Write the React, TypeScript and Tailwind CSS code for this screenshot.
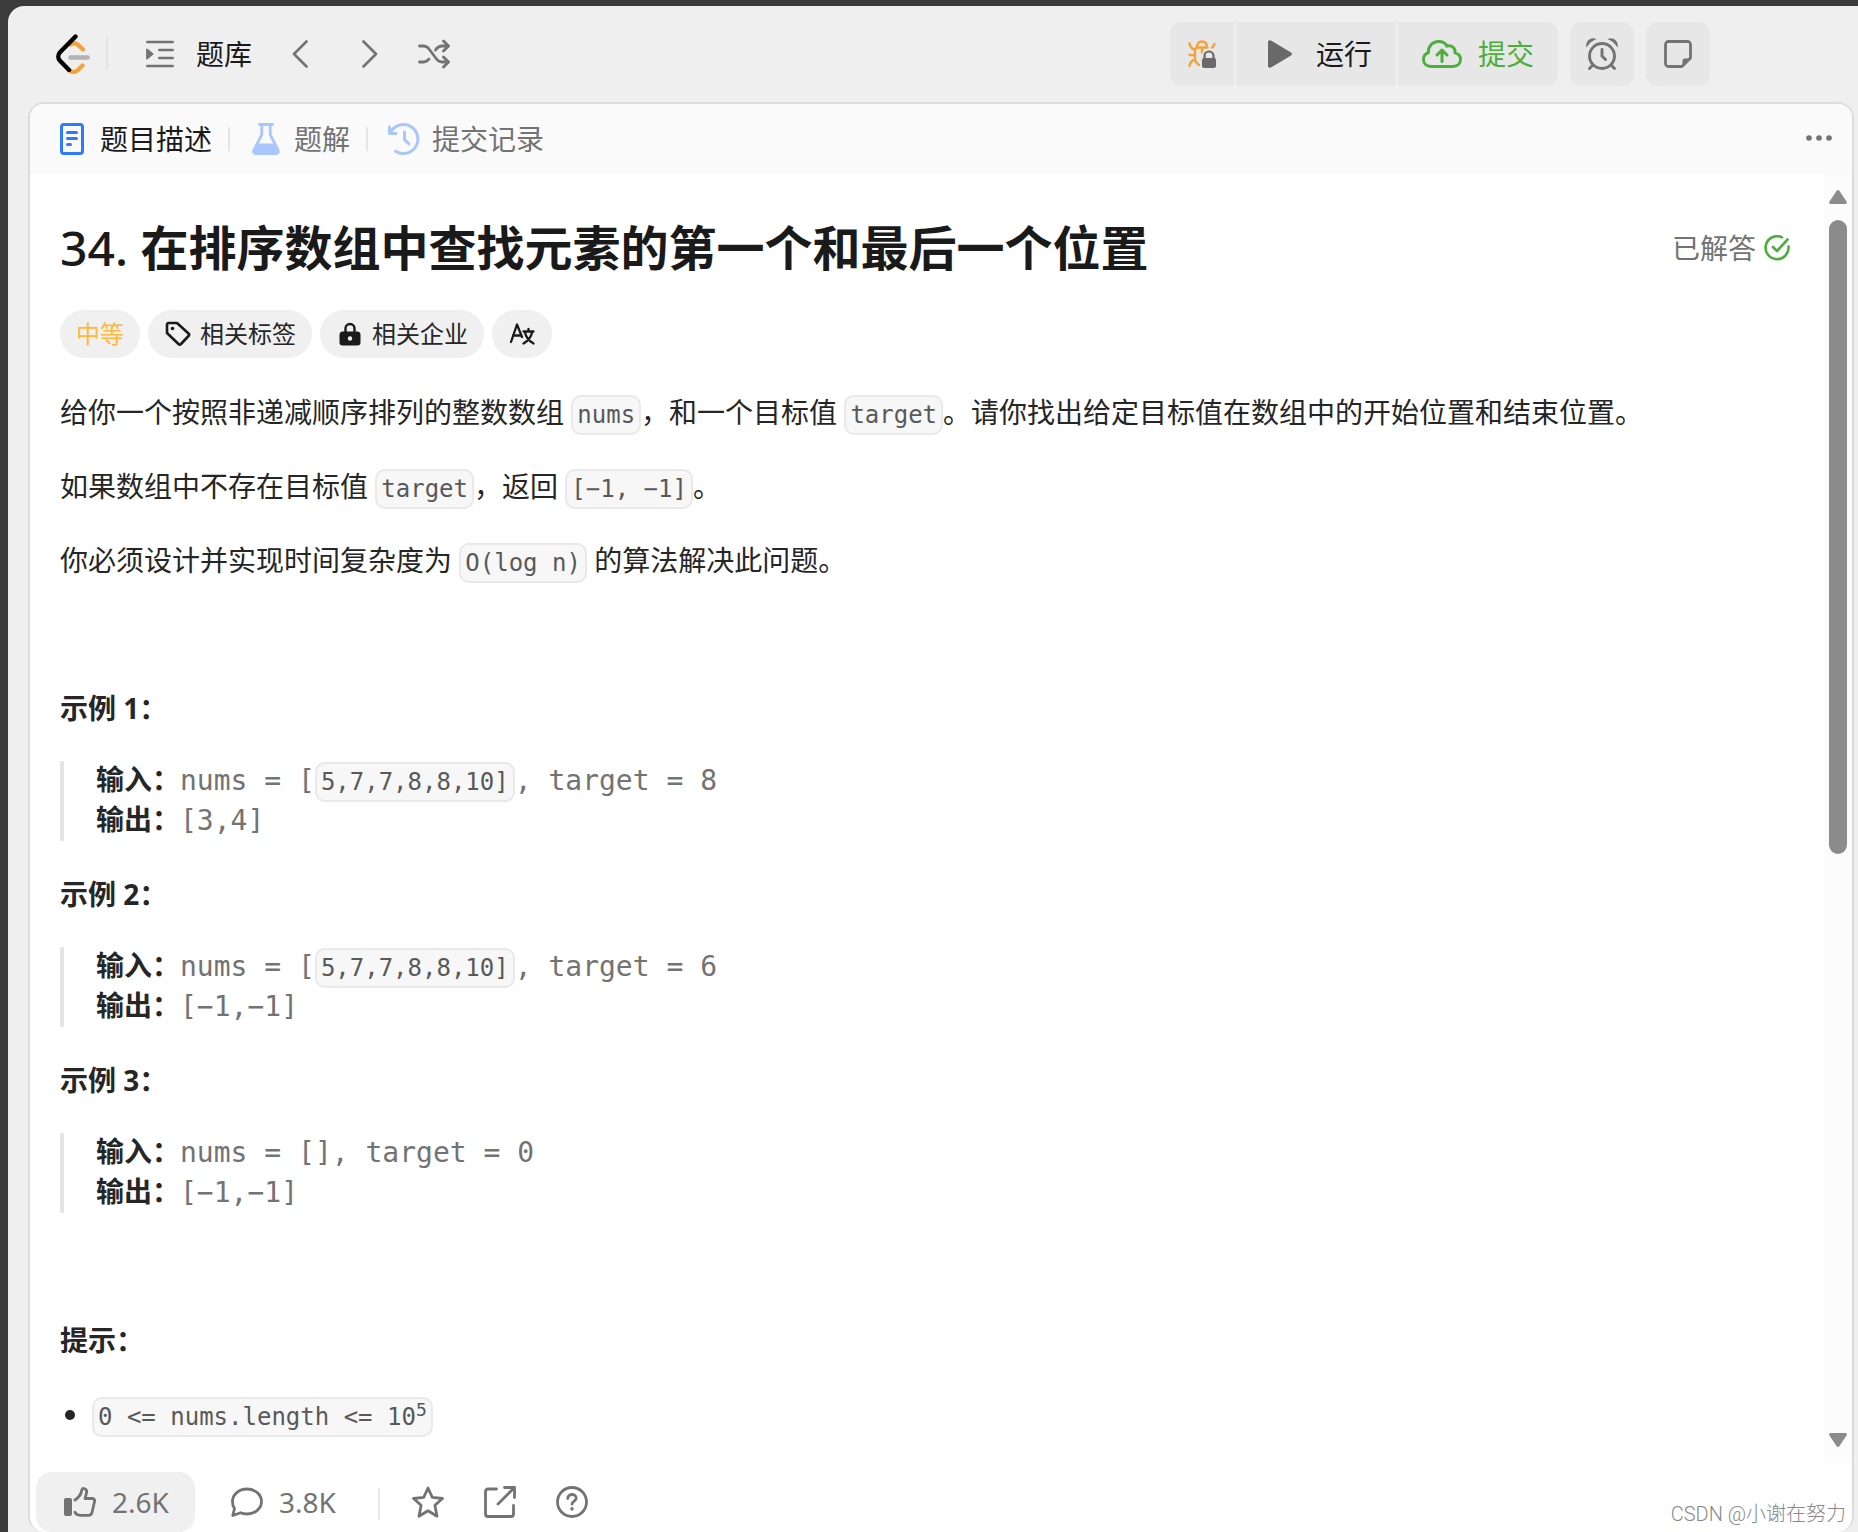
import type { ReactNode } from 'react';

const examples = [
  { id: 1, list: '5,7,7,8,8,10', target: '8', output: '[3,4]' },
  { id: 2, list: '5,7,7,8,8,10', target: '6', output: '[−1,−1]' },
  { id: 3, list: '', target: '0', output: '[−1,−1]' },
];

function Code({ children }: { children: ReactNode }) {
  return (
    <code className="rounded-[10px] border-2 border-[#e9e9e9] bg-[#f7f7f7] px-1 py-1 font-['DejaVu_Sans_Mono','Noto_Sans_CJK_SC',monospace] text-2xl leading-none text-[#595959]">
      {children}
    </code>
  );
}

function Divider() {
  return <div className="h-6 w-0.5 bg-[#e5e5e5]" />;
}

function Logo() {
  return (
    <svg className="h-10 w-[34px]" viewBox="0 0 34 40" fill="none" strokeLinecap="round">
      <path d="M14.500 10.500c3-2 5.500-1.500 7.500.3L27 15.500" stroke="#f3a33c" strokeWidth="4.400" />
      <path d="M13 36.200c2.800 2.200 6.500 2.200 9-.2L26.500 31.500" stroke="#f3a33c" strokeWidth="4.400" />
      <path d="M14.500 23.500h17.200" stroke="#b3b3b3" strokeWidth="4.400" />
      <path d="M19.500 2.500L4 18.200c-2.300 2.500-2.300 6 0 8.500l9 9.300" stroke="#000" strokeWidth="4.400" strokeLinejoin="round" />
    </svg>
  );
}

function BugLockIcon() {
  return (
    <svg className="h-7 w-7" viewBox="0 0 28 28" fill="none">
      <g stroke="#f3a33c" strokeWidth="2.400" strokeLinecap="round">
        <path d="M9 7.500c0-4 2-6 5-6s5 2 5 6M8.500 7.500h11M14 8v4.500" />
        <path d="M11 25C8.500 23.500 7 21 7 17.500V11c0-1.500.5-2.500 1.500-3.500M6.500 9.500C3 8.500 2 7 1.500 3.500M6 15H1.500M7 19.500C3.500 20.500 2 22.500 1.500 26M24 7.500c1.500-1 2-2 2.500-3.500" />
      </g>
      <path d="M16.500 19v-3a4.500 4.500 0 019 0v3" stroke="#e7e7e7" strokeWidth="5" />
      <path d="M16.500 19v-3a4.500 4.500 0 019 0v3" stroke="#696969" strokeWidth="2.200" />
      <rect x="14" y="18" width="14" height="10" rx="2" fill="#696969" />
    </svg>
  );
}

function Header() {
  return (
    <header className="flex h-24 items-center pr-[148px] pl-12 text-[28px] text-[#1a1a1a]">
      <a href="#" aria-label="LeetCode">
        <Logo />
      </a>
      <div className="ml-4 h-8 w-0.5 bg-[#e2e2e2]" />
      <button className="ml-[38px] flex items-center gap-[22px]">
        <svg className="h-7 w-7" viewBox="0 0 28 28" fill="none" stroke="#737373" strokeWidth="2.600" strokeLinecap="round">
          <path d="M1.300 2h25.400M13.300 10h13.400M13.300 18h13.400M1.300 26h25.400" />
          <path d="M1 9.500v9l5.500-4.500z" fill="#737373" strokeWidth="1.800" strokeLinejoin="round" />
        </svg>
        题库
      </button>
      <button className="ml-10" aria-label="上一题">
        <svg className="h-7 w-4" viewBox="0 0 16 28" fill="none" stroke="#737373" strokeWidth="2.600" strokeLinecap="round" strokeLinejoin="round">
          <path d="M14.500 1.500L2 14l12.500 12.500" />
        </svg>
      </button>
      <button className="ml-[54px]" aria-label="下一题">
        <svg className="h-7 w-4" viewBox="0 0 16 28" fill="none" stroke="#737373" strokeWidth="2.600" strokeLinecap="round" strokeLinejoin="round">
          <path d="M1.500 1.500L14 14 1.500 26.500" />
        </svg>
      </button>
      <button className="ml-10" aria-label="随机一题">
        <svg className="h-8 w-8" viewBox="0 0 32 32" fill="none" stroke="#737373" strokeWidth="2.800" strokeLinecap="round" strokeLinejoin="round">
          <path d="M1.500 8h4c2.500 0 4 1 5.500 3l7.500 10c1.500 2 3 3 5.500 3h6M1.500 24h4c2.500 0 4-1 5.500-3M17.500 12c2-3 3.500-4 6.500-4h6" />
          <path d="M25.500 3L30.500 8l-5 5M25.500 19l5 5-5 5" />
        </svg>
      </button>

      <div className="ml-auto flex gap-3">
        <div className="flex h-16 gap-0.5 overflow-hidden rounded-xl">
          <button className="flex w-16 items-center justify-center bg-[#e7e7e7]" aria-label="调试">
            <BugLockIcon />
          </button>
          <button className="flex w-40 items-center gap-6 bg-[#e7e7e7] pl-8">
            <svg className="h-7 w-6" viewBox="0 0 24 28" fill="#696969">
              <path d="M0 2.500C0 .5 1.500-.3 3 .6l20 11.800c1.300.8 1.300 2.400 0 3.200L3 27.400c-1.500.9-3 .1-3-1.900z" />
            </svg>
            运行
          </button>
          <button className="flex w-40 items-center gap-4 bg-[#e7e7e7] pl-6 text-[#4caf3c]">
            <svg className="h-7 w-10" viewBox="0 0 40 28" fill="none" stroke="currentColor" strokeWidth="3" strokeLinecap="round" strokeLinejoin="round">
              <path d="M9 26.500C4.500 26.500 1.500 23.500 1.500 19.300c0-3.300 1.800-5.700 4.800-6.600C6.300 6 10.500 1.500 16.500 1.500c4.500 0 7.300 2.200 8.300 4.600 4.700-1.400 9 2 8.200 6.800 3.500.9 5.500 3.300 5.500 6.400 0 4.300-3.200 7.200-7.500 7.200zM20 21.500V10.500M15 15l5-5 5 5" />
            </svg>
            提交
          </button>
        </div>
        <button className="flex h-16 w-16 items-center justify-center rounded-xl bg-[#e7e7e7]" aria-label="计时器">
          <svg className="h-8 w-8" viewBox="0 0 32 32" fill="none" stroke="#737373" strokeWidth="2.900" strokeLinecap="round" strokeLinejoin="round">
            <circle cx="16" cy="18" r="12.500" />
            <path d="M16 11.500V18l3.500 3.500M6.500 27.500l-3 3M25.500 27.500l3 3" />
            <path d="M.5 9.500C-1 3.500 4.500-1.500 10.500 1 6.500 2.500 3 5.500.500 9.500zM31.500 9.500C33 3.500 27.500-1.500 21.500 1c4 1.500 7.500 4.500 10 8.500z" fill="#737373" stroke="none" />
          </svg>
        </button>
        <button className="flex h-16 w-16 items-center justify-center rounded-xl bg-[#e7e7e7]" aria-label="笔记">
          <svg className="h-7 w-7" viewBox="0 0 28 28" fill="none" stroke="#737373" strokeWidth="2.800" strokeLinejoin="round">
            <path d="M18 26.500H4.500a3 3 0 01-3-3v-19a3 3 0 013-3h19a3 3 0 013 3V18z" />
            <path d="M18.500 26.500V20.500a2 2 0 012-2h6z" fill="#737373" stroke="none" />
          </svg>
        </button>
      </div>
    </header>
  );
}

function TabBar() {
  return (
    <nav className="flex h-[70px] items-center bg-[#fafafa] pr-5 pl-[30px] text-[28px] text-[#737373]">
      <button className="flex items-center gap-4 text-[#1a1a1a]">
        <svg className="h-8 w-6" viewBox="0 0 24 32" fill="none" stroke="#2f7bff" strokeWidth="3" strokeLinecap="round">
          <rect x="1.500" y="1.500" width="21" height="29" rx="2.500" />
          <path d="M7.500 9.500h9M7.500 15.500h9M7.500 21.500h3" />
        </svg>
        题目描述
      </button>
      <div className="mx-4">
        <Divider />
      </div>
      <button className="ml-1.5 flex items-center gap-3.5">
        <svg className="h-8 w-7" viewBox="0 0 28 32" fill="none" stroke="#a9c7fc" strokeWidth="2.800" strokeLinecap="round" strokeLinejoin="round">
          <path d="M7.500 1.500h13M9.800 2v9.500L2 27c-.9 2 0 3.500 2 3.500h20c2 0 2.900-1.500 2-3.500l-7.800-15.500V2" />
          <path d="M5 20.500h18l3.500 7.500-1.500 2.500H3L1.500 28z" fill="#a9c7fc" stroke="none" />
        </svg>
        题解
      </button>
      <div className="mx-4">
        <Divider />
      </div>
      <button className="ml-1 flex items-center gap-3">
        <svg className="h-8 w-8" viewBox="0 0 32 32" fill="none" stroke="#a9c7fc" strokeWidth="3" strokeLinecap="round" strokeLinejoin="round">
          <path d="M1.500 4v6.500H8M2.200 10A14.500 14.500 0 117.500 28.200M16.500 9v7.500l4.500 4.500" />
        </svg>
        提交记录
      </button>
      <button className="ml-auto" aria-label="更多">
        <svg className="h-8 w-[26px]" viewBox="0 0 26 32" fill="#737373">
          <circle cx="3" cy="15" r="2.800" />
          <circle cx="13" cy="15" r="2.800" />
          <circle cx="23" cy="15" r="2.800" />
        </svg>
      </button>
    </nav>
  );
}

function Chips() {
  return (
    <div className="flex gap-2 text-2xl text-[#262626]">
      <span className="flex h-12 items-center rounded-full bg-[#f0f0f0] px-4 text-[#ffb83c]">中等</span>
      <button className="flex h-12 items-center gap-2 rounded-full bg-[#f0f0f0] px-4">
        <svg className="h-7 w-7" viewBox="0 0 28 28" fill="none" stroke="#1a1a1a" strokeWidth="2.600" strokeLinejoin="round">
          <path d="M3 4.500A1.500 1.500 0 014.500 3H13l11.500 10.500c.8.800.8 1.700 0 2.500L17 24c-.8.800-1.700.8-2.500 0L3 13z" />
          <circle cx="8.500" cy="8.500" r="1.800" fill="#1a1a1a" stroke="none" />
        </svg>
        相关标签
      </button>
      <button className="flex h-12 items-center gap-2 rounded-full bg-[#f0f0f0] px-4">
        <svg className="h-7 w-7" viewBox="0 0 28 28" fill="none">
          <path d="M9.500 12V8.500a4.500 4.500 0 019 0V12" stroke="#1a1a1a" strokeWidth="2.400" />
          <path d="M6 11.500h16a3 3 0 012.500 3V22.500a3 3 0 01-3 3h-15a3 3 0 01-3-3v-8a3 3 0 012.500-3z" fill="#1a1a1a" />
          <circle cx="14" cy="18.500" r="2.200" fill="#f0f0f0" />
        </svg>
        相关企业
      </button>
      <button className="flex h-12 w-[60px] items-center justify-center rounded-full bg-[#f0f0f0]" aria-label="切换语言">
        <svg className="h-6 w-[26px]" viewBox="0 0 26 24" fill="none" stroke="#1a1a1a" strokeWidth="2.300" strokeLinecap="round" strokeLinejoin="round">
          <path d="M2 20L8 2.500 13 15M4 13.500h7.500M14.500 9.500h10M19.500 7v2.500M16 10.500c1 5 4 8.500 8.500 11M23 10.500c-1 5-4 8.500-8.500 11" />
        </svg>
      </button>
    </div>
  );
}

function Example({ id, list, target, output }: (typeof examples)[number]) {
  return (
    <>
      <p className="font-bold">示例 {id}：</p>
      <pre className="border-l-4 border-[#e5e5e5] pl-8 font-['DejaVu_Sans_Mono','Noto_Sans_CJK_SC',monospace] leading-10 text-[#737373]">
        <strong className="font-['Noto_Sans','Noto_Sans_CJK_SC',sans-serif] leading-none text-[#262626]">输入：</strong>
        nums = [{list ? <Code>{list}]</Code> : ']'}, target = {target}
        {'\n'}
        <strong className="font-['Noto_Sans','Noto_Sans_CJK_SC',sans-serif] leading-none text-[#262626]">输出：</strong>
        {output}
      </pre>
    </>
  );
}

function Description() {
  return (
    <main className="min-w-0 flex-1 overflow-hidden pr-[34px] pl-[30px]">
      <div className="flex items-center justify-between pt-10">
        <h1 className="text-5xl leading-[68px] font-bold text-[#1a1a1a]">
          <span className="font-medium">34. </span>在排序数组中查找元素的第一个和最后一个位置
        </h1>
        <div className="flex items-center gap-2 text-[28px] text-[#737373]">
          已解答
          <svg className="h-[26px] w-[26px]" viewBox="0 0 26 26" fill="none" stroke="#4caf3c" strokeWidth="2.600" strokeLinecap="round" strokeLinejoin="round">
            <path d="M18 2.300A11.500 11.500 0 1024.500 11.500M9 12l4 4L23.500 4.500" />
          </svg>
        </div>
      </div>
      <div className="mt-7">
        <Chips />
      </div>
      <div className="mt-[33px] flex flex-col gap-8 text-[28px] leading-[42px] text-[#262626]">
        <p>
          给你一个按照非递减顺序排列的整数数组 <Code>nums</Code>，和一个目标值 <Code>target</Code>。请你找出给定目标值在数组中的开始位置和结束位置。
        </p>
        <p>
          如果数组中不存在目标值 <Code>target</Code>，返回 <Code>[−1, −1]</Code>。
        </p>
        <p>
          你必须设计并实现时间复杂度为 <Code>O(log n)</Code> 的算法解决此问题。
        </p>
        <p>&nbsp;</p>
        {examples.map((example) => (
          <Example key={example.id} {...example} />
        ))}
        <p>&nbsp;</p>
        <p className="font-bold">提示：</p>
        <ul className="list-disc pl-8">
          <li>
            <Code>
              0 &lt;= nums.length &lt;= 10<sup className="text-lg leading-none">5</sup>
            </Code>
          </li>
        </ul>
      </div>
    </main>
  );
}

function Scrollbar() {
  return (
    <div className="flex w-7 flex-col items-center bg-[#fcfcfc] py-4" aria-hidden="true">
      <svg className="h-3.5 w-[18px]" viewBox="0 0 18 14" fill="#8b8b8b">
        <path d="M7.500 1c.8-1.200 2.200-1.200 3 0l7 10.500c.8 1.300.2 2.500-1.300 2.500H1.800C.3 14-.3 12.800.5 11.500z" />
      </svg>
      <div className="my-4 w-[18px] flex-1">
        <div className="h-[53%] rounded-full bg-[#8b8b8b]" />
      </div>
      <svg className="h-3.5 w-[18px]" viewBox="0 0 18 14" fill="#8b8b8b">
        <path d="M7.500 13c.8 1.200 2.200 1.200 3 0l7-10.500C18.300 1.200 17.700 0 16.200 0H1.800C.3 0-.3 1.200.5 2.500z" />
      </svg>
    </div>
  );
}

function Footer() {
  return (
    <footer className="relative flex h-[69px] items-end pl-1.5 text-[28px] text-[#737373]">
      <button className="flex h-[60px] items-center gap-4 rounded-2xl bg-[#f0f0f0] pr-[26px] pl-7">
        <svg className="h-8 w-8" viewBox="0 0 32 32" fill="none" stroke="#737373" strokeWidth="2.800" strokeLinecap="round" strokeLinejoin="round">
          <rect x="0" y="12" width="8" height="18" rx="2" fill="#737373" stroke="none" />
          <path d="M11 14c3-2 5-4 6-7l.8-3c.4-1.300 1.200-1.800 2.200-1.500 2.200.6 3 2.500 2.500 4.500L21 12.500h7c2 0 3 1.300 2.500 3.200L28 26.500c-.5 2-1.500 2.800-3.500 2.800H17c-3 0-5-1-6-3" />
        </svg>
        2.6K
      </button>
      <button className="ml-9 flex h-[60px] items-center gap-4">
        <svg className="h-8 w-8" viewBox="0 0 32 32" fill="none" stroke="#737373" strokeWidth="2.800" strokeLinejoin="round">
          <path d="M1.800 29.500L3.500 22.500A12 12 0 011.500 15.500C1.500 8.500 8 3 16 3s14.500 5.500 14.500 12.500S24 28 16 28c-2.500 0-4.500-.3-6.500-1.300z" />
        </svg>
        3.8K
      </button>
      <div className="mb-3 ml-[42px] h-8 w-0.5 bg-[#e8e8e8]" />
      <div className="ml-8 flex h-[60px] items-center gap-10">
        <button aria-label="收藏">
          <svg className="h-8 w-8" viewBox="0 0 32 32" fill="none" stroke="#737373" strokeWidth="2.800" strokeLinejoin="round">
            <path d="M16 2l4.300 9.400L30.500 12.500l-7.600 6.800L25 30.200l-9-5.400-9 5.400 2.100-10.900L1.500 12.500l10.200-1.100z" />
          </svg>
        </button>
        <button aria-label="分享">
          <svg className="h-8 w-8" viewBox="0 0 32 32" fill="none" stroke="#737373" strokeWidth="2.800" strokeLinecap="round" strokeLinejoin="round">
            <path d="M12.500 3H4a2.500 2.500 0 00-2.500 2.500v22.500A2.500 2.500 0 004 30.500h23a2.500 2.500 0 002.500-2.500v-8.500M20.500 1.500h10v10M30.500 1.500L14 18" />
          </svg>
        </button>
        <button aria-label="帮助">
          <svg className="h-8 w-8" viewBox="0 0 32 32" fill="none" stroke="#737373" strokeWidth="2.800" strokeLinecap="round" strokeLinejoin="round">
            <circle cx="16" cy="16" r="14.500" />
            <path d="M11.800 12.500c0-2.300 1.800-4 4.200-4s4.200 1.600 4.200 3.700c0 2.800-4.200 3.200-4.200 6" />
            <path d="M16 22.800v.2" strokeWidth="3.400" />
          </svg>
        </button>
      </div>
      <span className="absolute right-1.5 bottom-1 font-['Roboto','Noto_Sans_CJK_SC',sans-serif] text-xl font-light text-[#888]">
        CSDN @小谢在努力
      </span>
    </footer>
  );
}

export default function App() {
  return (
    <div className="h-screen bg-[#3b3b3b] pt-1.5 pl-2 font-['Noto_Sans','Noto_Sans_CJK_SC',sans-serif]">
      <div className="flex h-full flex-col rounded-tl-2xl bg-[#efefef]">
        <Header />
        <section className="mr-1 ml-5 flex min-h-0 flex-1 flex-col overflow-hidden rounded-2xl border-2 border-b-0 border-[#dcdcdc] bg-white">
          <TabBar />
          <div className="flex min-h-0 flex-1">
            <Description />
            <Scrollbar />
          </div>
          <Footer />
        </section>
      </div>
    </div>
  );
}
